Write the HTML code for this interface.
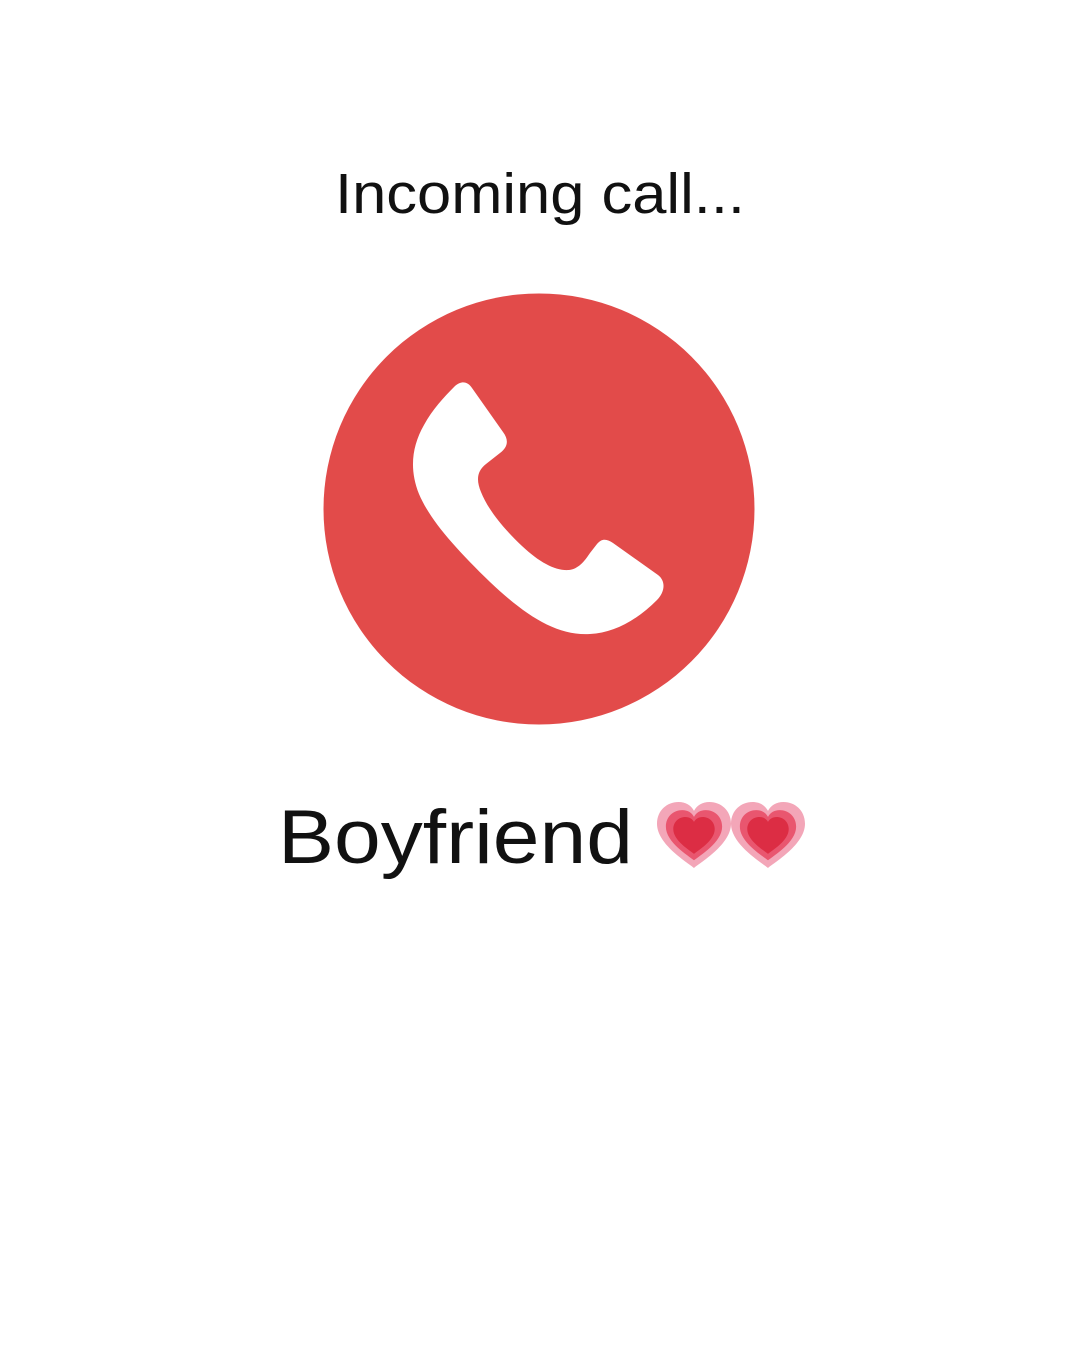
<!DOCTYPE html>
<html><head><meta charset="utf-8"><style>
html,body{margin:0;padding:0;background:#fff;width:1080px;height:1350px;overflow:hidden}
</style></head><body>
<svg width="1080" height="1350" viewBox="0 0 1080 1350" xmlns="http://www.w3.org/2000/svg">
<defs>
<path id="h" d="M50 97 C40 88 0 62 0 32 C0 12 14 0 29 0 C39 0 46 5 50 13 C54 5 61 0 71 0 C86 0 100 12 100 32 C100 62 60 88 50 97Z"/>
<g id="heart">
<use href="#h" fill="#f3a6b8"/>
<use href="#h" fill="#e9566f" transform="translate(12 12) scale(0.76)"/>
<use href="#h" fill="#dc2d44" transform="translate(22 22) scale(0.56)"/>
</g>
</defs>
<text x="335" y="213" font-family="Liberation Sans, sans-serif" font-size="57" fill="#111" textLength="410" lengthAdjust="spacingAndGlyphs">Incoming call...</text>
<circle cx="539" cy="509" r="215.5" fill="#e24b4a"/>
<path fill="#fff" d="M455 386 C462 380 468 382 472 388 L503 432 C509 440 508 447 500 453 L486 464 C477 471 476 480 481 492 C488 510 505 530 522 546 C540 563 556 571 569 570 C578 569 584 562 590 553 L597 544 C602 538 607 539 613 543 L658 575 C666 581 665 592 657 600 C637 620 614 633 590 634 C556 636 525 615 490 582 C455 548 430 520 419 494 C409 469 412 446 424 425 C432 410 444 397 455 386Z"/>
<text x="278" y="863" font-family="Liberation Sans, sans-serif" font-size="76" fill="#111" textLength="355" lengthAdjust="spacingAndGlyphs">Boyfriend</text>
<use href="#heart" transform="translate(657 802) scale(0.74 0.68)"/>
<use href="#heart" transform="translate(731 802) scale(0.74 0.68)"/>
</svg>
</body></html>
